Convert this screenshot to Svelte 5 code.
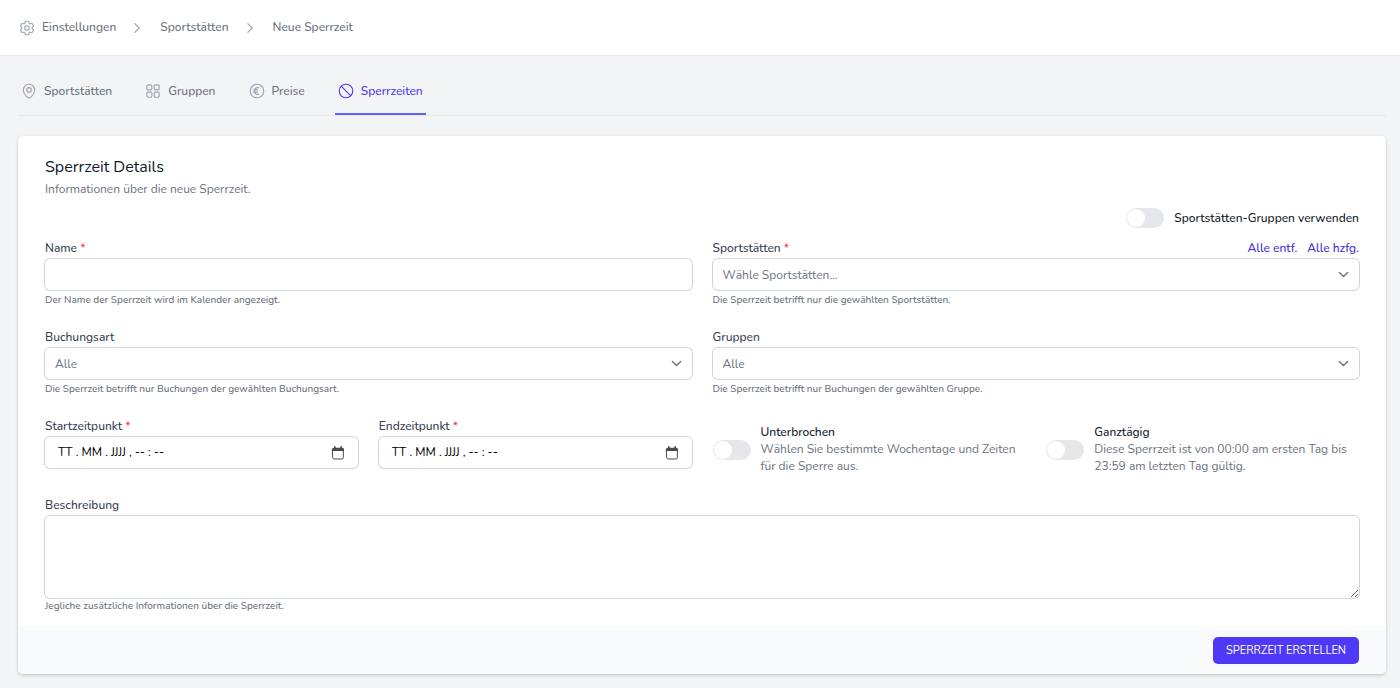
<script>
  const crumbs = ['Einstellungen', 'Sportstätten', 'Neue Sperrzeit'];

  const tabs = [
    { name: 'Sportstätten', icon: 'pin' },
    { name: 'Gruppen', icon: 'grid' },
    { name: 'Preise', icon: 'euro' },
    { name: 'Sperrzeiten', icon: 'ban', current: true }
  ];

  const dates = [
    { id: 'start', label: 'Startzeitpunkt' },
    { id: 'end', label: 'Endzeitpunkt' }
  ];

  const options = [
    {
      id: 'interrupted',
      label: 'Unterbrochen',
      text: 'Wählen Sie bestimmte Wochentage und Zeiten für die Sperre aus.'
    },
    {
      id: 'allday',
      label: 'Ganztägig',
      text: 'Diese Sperrzeit ist von 00:00 am ersten Tag bis 23:59 am letzten Tag gültig.'
    }
  ];
</script>

{#snippet icon(name)}
  <svg class="icon {name}" viewBox="0 0 24 24" aria-hidden="true">
    {#if name === 'cog'}
      <path d="M9.594 3.94c.09-.542.56-.94 1.11-.94h2.593c.55 0 1.02.398 1.11.94l.213 1.281c.063.374.313.686.645.87.074.04.147.083.22.127.325.196.72.257 1.075.124l1.217-.456a1.125 1.125 0 0 1 1.37.49l1.296 2.247a1.125 1.125 0 0 1-.26 1.431l-1.003.827c-.293.241-.438.613-.43.992a7.723 7.723 0 0 1 0 .255c-.008.378.137.75.43.991l1.004.827c.424.35.534.955.26 1.43l-1.298 2.247a1.125 1.125 0 0 1-1.369.491l-1.217-.456c-.355-.133-.75-.072-1.076.124a6.47 6.47 0 0 1-.22.128c-.331.183-.581.495-.644.869l-.213 1.281c-.09.543-.56.94-1.11.94h-2.594c-.55 0-1.019-.398-1.11-.94l-.213-1.281c-.062-.374-.312-.686-.644-.87a6.52 6.52 0 0 1-.22-.127c-.325-.196-.72-.257-1.076-.124l-1.217.456a1.125 1.125 0 0 1-1.369-.49l-1.297-2.247a1.125 1.125 0 0 1 .26-1.431l1.004-.827c.292-.24.437-.613.43-.991a6.932 6.932 0 0 1 0-.255c.007-.38-.138-.751-.43-.992l-1.004-.827a1.125 1.125 0 0 1-.26-1.43l1.297-2.247a1.125 1.125 0 0 1 1.37-.491l1.216.456c.356.133.751.072 1.076-.124.072-.044.146-.086.22-.128.332-.183.582-.495.644-.869l.214-1.28Z" />
      <circle cx="12" cy="12" r="3" />
    {:else if name === 'chevron'}
      <path d="m8.25 4.5 7.5 7.5-7.5 7.5" />
    {:else if name === 'pin'}
      <circle cx="12" cy="10.5" r="3" />
      <path d="M19.5 10.5c0 7.142-7.5 11.25-7.5 11.25S4.5 17.642 4.5 10.5a7.5 7.5 0 1 1 15 0Z" />
    {:else if name === 'grid'}
      <rect x="3.75" y="3.75" width="6.75" height="6.75" rx="1.8" />
      <rect x="13.5" y="3.75" width="6.75" height="6.75" rx="1.8" />
      <rect x="3.75" y="13.5" width="6.75" height="6.75" rx="1.8" />
      <rect x="13.5" y="13.5" width="6.75" height="6.75" rx="1.8" />
    {:else if name === 'euro'}
      <path d="M14.25 7.756a4.5 4.5 0 1 0 0 8.488M7.5 10.5h5.25m-5.25 3h5.25M21 12a9 9 0 1 1-18 0 9 9 0 0 1 18 0Z" />
    {:else if name === 'ban'}
      <path d="M18.364 18.364A9 9 0 0 0 5.636 5.636m12.728 12.728A9 9 0 0 1 5.636 5.636m12.728 12.728L5.636 5.636" />
    {:else if name === 'calendar'}
      <path d="M4 6.5h16v12.500a2 2 0 0 1-2 2H6a2 2 0 0 1-2-2Z" />
      <path class="solid" d="M5.500 4H6V2h2.500v2h7V2H18v2h.5a2.500 2.500 0 0 1 2.500 2.500V9H3V6.500A2.500 2.500 0 0 1 5.500 4Z" />
    {/if}
  </svg>
{/snippet}

<header class="topbar">
  <nav aria-label="Brotkrumen">
    <ol class="crumbs">
      {#each crumbs as crumb, i}
        <li>
          {@render icon(i === 0 ? 'cog' : 'chevron')}
          <a href="#top">{crumb}</a>
        </li>
      {/each}
    </ol>
  </nav>
</header>

<main>
  <nav class="tabs" aria-label="Bereiche">
    {#each tabs as tab}
      <a href="#top" class="tab" class:current={tab.current} aria-current={tab.current ? 'page' : undefined}>
        {@render icon(tab.icon)}
        <span>{tab.name}</span>
      </a>
    {/each}
  </nav>

  <form class="card">
    <div class="card-body">
      <h1>Sperrzeit Details</h1>
      <p class="intro">Informationen über die neue Sperrzeit.</p>

      <div class="group-switch">
        <input id="use-groups" class="switch" type="checkbox" role="switch" />
        <label for="use-groups" class="strong">Sportstätten-Gruppen verwenden</label>
      </div>

      <div class="grid">
        <div class="field half">
          <label for="name">Name <span class="required">*</span></label>
          <input id="name" class="control" type="text" />
          <p class="hint">Der Name der Sperrzeit wird im Kalender angezeigt.</p>
        </div>

        <div class="field half">
          <div class="label-row">
            <label for="venues">Sportstätten <span class="required">*</span></label>
            <div class="actions">
              <button type="button" class="link">Alle entf.</button>
              <button type="button" class="link">Alle hzfg.</button>
            </div>
          </div>
          <select id="venues" class="control">
            <option>Wähle Sportstätten...</option>
          </select>
          <p class="hint">Die Sperrzeit betrifft nur die gewählten Sportstätten.</p>
        </div>

        <div class="field half">
          <label for="type">Buchungsart</label>
          <select id="type" class="control">
            <option>Alle</option>
          </select>
          <p class="hint">Die Sperrzeit betrifft nur Buchungen der gewählten Buchungsart.</p>
        </div>

        <div class="field half">
          <label for="groups">Gruppen</label>
          <select id="groups" class="control">
            <option>Alle</option>
          </select>
          <p class="hint">Die Sperrzeit betrifft nur Buchungen der gewählten Gruppe.</p>
        </div>

        {#each dates as date}
          <div class="field">
            <label for={date.id}>{date.label} <span class="required">*</span></label>
            <div class="control date">
              <input id={date.id} type="text" placeholder="TT . MM . JJJJ , -- : --" />
              <button type="button" aria-label="Kalender öffnen">{@render icon('calendar')}</button>
            </div>
          </div>
        {/each}

        {#each options as option}
          <div class="option">
            <input id={option.id} class="switch" type="checkbox" role="switch" />
            <div>
              <label for={option.id} class="strong">{option.label}</label>
              <p>{option.text}</p>
            </div>
          </div>
        {/each}

        <div class="field full">
          <label for="description">Beschreibung</label>
          <textarea id="description" class="control"></textarea>
          <p class="hint">Jegliche zusätzliche Informationen über die Sperrzeit.</p>
        </div>
      </div>
    </div>

    <div class="card-footer">
      <button type="button" class="submit">Sperrzeit erstellen</button>
    </div>
  </form>
</main>

<style>
  :global(body) {
    background: #f3f4f6;
    color: #6b7280;
    font-family: Nunito, Lato, sans-serif;
    font-size: 12px;
    line-height: 17px;
  }

  h1,
  p,
  ol {
    margin: 0;
    padding: 0;
  }

  a {
    color: inherit;
    text-decoration: none;
  }

  input,
  select,
  textarea,
  button {
    margin: 0;
    padding: 0;
    border: 0;
    font: inherit;
    color: inherit;
    background: none;
  }

  button {
    cursor: pointer;
  }

  .icon {
    flex: none;
    width: 18px;
    height: 18px;
    fill: none;
    stroke: currentColor;
    stroke-width: 1.5;
    stroke-linecap: round;
    stroke-linejoin: round;
  }

  /* ---- Top bar ---- */
  .topbar {
    padding: 18px;
    background: #fff;
    border-bottom: 1px solid #e5e7eb;
  }

  .crumbs {
    display: flex;
    gap: 14px;
    font-weight: 500;
    list-style: none;
  }

  .crumbs li {
    display: flex;
    align-items: center;
    gap: 16px;
    height: 19px;
  }

  .crumbs li:first-child {
    gap: 6px;
  }

  .crumbs .icon {
    color: #9ca3af;
  }

  .crumbs .chevron {
    width: 14px;
    height: 14px;
    stroke-width: 2;
  }

  main {
    padding: 0 14px 14px 18px;
  }

  /* ---- Tabs ---- */
  .tabs {
    display: flex;
    gap: 27px;
    padding-top: 21px;
    font-weight: 500;
    border-bottom: 1px solid #e5e7eb;
  }

  .tab {
    display: flex;
    align-items: center;
    gap: 6px;
    height: 28px;
    padding: 0 3px 8px 2px;
    border-bottom: 2px solid transparent;
  }

  .tab .icon {
    color: #9ca3af;
  }

  .current,
  .tab.current .icon {
    color: #4f39f6;
  }

  .current {
    border-color: #615fff;
  }

  /* ---- Card ---- */
  .card {
    margin-top: 20px;
    overflow: hidden;
    background: #fff;
    border-radius: 5px;
    box-shadow: 0 1px 3px rgba(0, 0, 0, 0.12), 0 2px 4px rgba(0, 0, 0, 0.08);
  }

  .card-body {
    padding: 21px 27px 13px;
  }

  h1 {
    font-size: 16px;
    font-weight: 400;
    line-height: 21px;
    color: #101828;
  }

  .intro {
    margin-top: 3px;
  }

  .group-switch {
    display: flex;
    align-items: center;
    justify-content: flex-end;
    gap: 10px;
    margin: 10px 0 11px;
  }

  .strong {
    font-weight: 500;
    color: #101828;
  }

  .grid {
    display: grid;
    grid-template-columns: repeat(4, 1fr);
    gap: 21px;
  }

  .half {
    grid-column: span 2;
  }

  .full {
    grid-column: 1 / -1;
  }

  .field label {
    display: block;
    font-weight: 500;
    line-height: 19px;
    color: #364153;
  }

  .required {
    color: #fb2c36;
  }

  .label-row,
  .actions {
    display: flex;
    justify-content: space-between;
  }

  .actions {
    gap: 10px;
  }

  .link {
    font-weight: 500;
    line-height: 19px;
    color: #432dd7;
  }

  .control {
    display: block;
    box-sizing: border-box;
    width: 100%;
    height: 31px;
    margin-top: 1px;
    padding: 1px 10px 0;
    background: #fff;
    border-radius: 5px;
    box-shadow: 0 0 0 1px #d1d5dc;
  }

  select.control {
    appearance: none;
    background: #fff
      url("data:image/svg+xml,%3Csvg xmlns='http://www.w3.org/2000/svg' viewBox='0 0 20 20' fill='none' stroke='%236b7280' stroke-width='1.3' stroke-linecap='round' stroke-linejoin='round'%3E%3Cpath d='m6 8 4 4 4-4'/%3E%3C/svg%3E")
      right 5px center / 21px no-repeat;
  }

  textarea.control {
    height: 82px;
    resize: vertical;
  }

  .date {
    display: flex;
    align-items: center;
    padding: 0 12px 0 13px;
  }

  .date input {
    flex: 1;
    min-width: 0;
    color: #000;
    outline: none;
  }

  .date input::placeholder {
    color: #000;
    opacity: 1;
  }

  .date .icon {
    display: block;
    width: 16px;
    height: 16px;
    color: #4b4b4b;
  }

  .solid {
    fill: currentColor;
    stroke: none;
  }

  .hint {
    margin-top: 3px;
    font-size: 10px;
    font-weight: 500;
    line-height: 14px;
  }

  textarea + .hint {
    margin-top: 1px;
  }

  .option {
    display: flex;
    align-items: center;
    gap: 10px;
    padding-top: 7px;
  }

  .switch {
    flex: none;
    display: flex;
    appearance: none;
    width: 38px;
    height: 20px;
    padding: 1px;
    box-sizing: border-box;
    background: #e5e7eb;
    border-radius: 10px;
  }

  .switch::before {
    content: '';
    width: 18px;
    height: 18px;
    background: #fff;
    border-radius: 50%;
  }

  .switch:checked {
    justify-content: flex-end;
    background: #4f39f6;
  }

  .card-footer {
    display: flex;
    justify-content: flex-end;
    padding: 11px 27px 10px;
    background: #f9fafb;
  }

  .submit {
    padding: 5px 13px;
    font-size: 11px;
    text-transform: uppercase;
    color: #fff;
    background: #4f39f6;
    border-radius: 5px;
  }
</style>
